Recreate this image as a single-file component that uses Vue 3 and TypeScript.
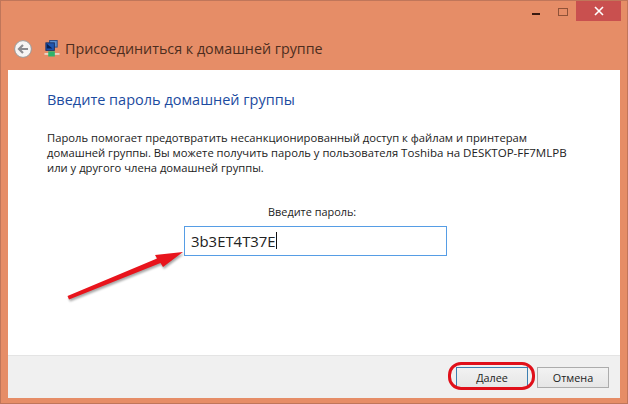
<script setup lang="ts">
const lineOne = 'Пароль помогает предотвратить несанкционированный доступ к файлам и принтерам'
const lineTwo = 'домашней группы. Вы можете получить пароль у пользователя'
const lineTwoEnd = 'Toshiba на DESKTOP-FF7MLPB'
const lineThree = 'или у другого члена домашней группы.'
</script>

<template>
  <div class="window">
    <div class="caption">
      <span class="btn-min"></span>
      <span class="btn-max"></span>
      <span class="btn-close">
        <svg width="10" height="10" viewBox="0 0 10 10"><path d="M1 1L9 9M9 1L1 9" stroke="#fff" stroke-width="1.6" fill="none" /></svg>
      </span>
    </div>
    <div class="titlebar">
      <span class="back">
        <svg width="18" height="18" viewBox="0 0 18 18"><circle cx="9" cy="9" r="8.4" fill="#f6f4f3" stroke="#9a9a9a" stroke-width="1" /><path d="M14 9H5.5M9 5L5 9L9 13" stroke="#8b8b8f" stroke-width="2.2" fill="none" /></svg>
      </span>
      <svg class="net" width="16" height="17" viewBox="0 0 17 18">
        <rect x="6" y="0.5" width="8" height="7" fill="#5b8fd0" stroke="#2e4a80" />
        <rect x="2" y="3" width="9" height="8" fill="#1f55b0" stroke="#1c2f60" />
        <path d="M3 4l6 5H3z" fill="#0a1f4d" />
        <rect x="0.5" y="14" width="16" height="1.6" fill="#e8e8e0" />
        <rect x="4.5" y="12" width="7" height="5.5" fill="#2fb36a" />
      </svg>
      <span class="title">Присоединиться к домашней группе</span>
    </div>
    <div class="panel">
      <div class="body">
        <h1 class="heading">Введите пароль домашней группы</h1>
        <div class="text">
          <div>{{ lineOne }}</div>
          <div>{{ lineTwo }} <span class="latin">{{ lineTwoEnd }}</span></div>
          <div>{{ lineThree }}</div>
        </div>
        <div class="field">
          <label class="label">Введите пароль:</label>
          <div class="input"><span class="value">3b3ET4T37E</span><i class="caret"></i></div>
        </div>
      </div>
      <div class="footer">
        <button class="button primary">Далее</button>
        <button class="button">Отмена</button>
      </div>
    </div>

    <svg class="arrow" width="130" height="70" viewBox="0 0 130 70">
      <path d="M1.5 52L91 14.5L89 11L117 8L97 23L94.5 19L3 55.5Z" fill="#e8141c" />
    </svg>
    <span class="ring"></span>
  </div>
</template>

<style>
html, body { margin: 0; padding: 0; }
</style>

<style scoped>
.window {
  position: relative;
  width: 628px;
  height: 404px;
  box-sizing: border-box;
  background: #e68d67;
  border: 1px solid #c0765a;
  display: flex;
  flex-direction: column;
  overflow: hidden;
  font-family: "Open Sans", "Noto Sans", sans-serif;
  color: #222;
}
.caption {
  height: 20px;
  display: flex;
  justify-content: flex-end;
  align-items: stretch;
  padding-right: 6px;
}
.btn-min {
  width: 8px;
  height: 2px;
  margin-top: 12px;
  margin-right: 18px;
  background: #3a1a10;
}
.btn-max {
  width: 8px;
  height: 6px;
  margin-top: 7px;
  margin-right: 8px;
  border: 1px solid #8f5238;
}
.btn-close {
  width: 45px;
  background: #c9504f;
  display: flex;
  align-items: center;
  justify-content: center;
}
.titlebar {
  height: 49px;
  display: flex;
  align-items: center;
  padding: 6px 0 0 13px;
  box-sizing: border-box;
}
.back { display: flex; margin-right: 12px; }
.net { margin-right: 5px; }
.title {
  font-size: 14.3px;
  color: #4d2d20;
  white-space: nowrap;
}
.panel {
  margin: 0 7px 5px 7px;
  flex: 1;
  background: #fff;
  display: flex;
  flex-direction: column;
}
.body {
  flex: 1;
  padding: 19px 39px 0 39px;
  display: flex;
  flex-direction: column;
}
.heading {
  margin: 0;
  font-size: 14.5px;
  font-weight: 400;
  color: #1c4ba0;
  line-height: 22px;
  white-space: nowrap;
}
.text {
  margin-top: 19px;
  font-size: 11.22px;
  line-height: 15.2px;
  color: #222;
  white-space: nowrap;
}
.latin {
  font-size: 11.55px;
}
.field {
  display: flex;
  flex-direction: column;
  align-items: flex-start;
  margin-top: 28px;
}
.label {
  align-self: flex-start;
  margin-left: 221px;
  font-size: 10.9px;
  line-height: 16px;
}
.input {
  margin-top: 6px;
  margin-left: 137px;
  width: 263px;
  height: 30px;
  box-sizing: border-box;
  border: 1px solid #569de5;
  display: flex;
  align-items: center;
  padding-left: 6px;
}
.value {
  font-size: 14.9px;
  color: #222;
}
.caret {
  width: 1px;
  height: 17px;
  background: #111;
}
.footer {
  height: 43px;
  background: #f0f0f0;
  border-top: 1px solid #e4e4e4;
  box-sizing: border-box;
  display: flex;
  justify-content: flex-end;
  align-items: center;
  gap: 9px;
  padding: 0 11px 0 0;
}
.button {
  width: 72px;
  height: 21px;
  padding: 0;
  background: linear-gradient(#f2f2f2, #e6e6e6);
  border: 1px solid #acacac;
  font-family: inherit;
  font-size: 10.8px;
  color: #222;
}
.primary {
  border-color: #3c7fb1;
}
.arrow {
  position: absolute;
  left: 65px;
  top: 243px;
  filter: drop-shadow(1px 2px 1px rgba(0, 0, 0, 0.35));
}
.ring {
  position: absolute;
  left: 447px;
  top: 361px;
  width: 81px;
  height: 22px;
  border: 3px solid #e0101a;
  border-radius: 13px;
}
</style>
